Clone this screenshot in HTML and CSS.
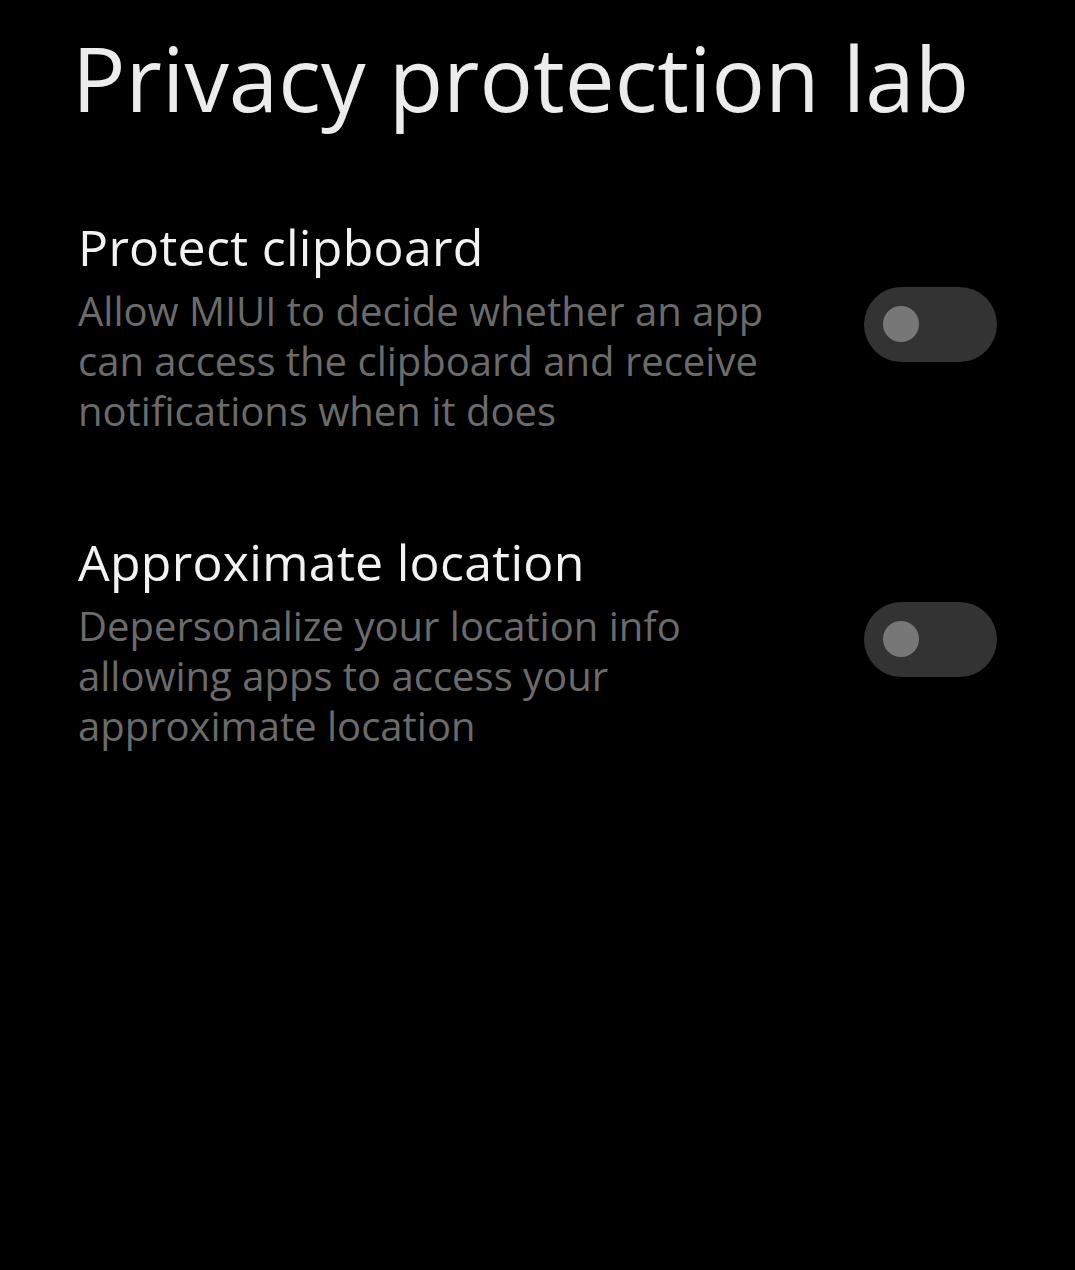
FILE: index.html
```html
<!DOCTYPE html>
<html lang="en">
<head>
  <meta charset="UTF-8" />
  <meta name="viewport" content="width=device-width, initial-scale=1.0"/>
  <title>Privacy protection lab</title>
  <link rel="stylesheet" href="styles.css">
</head>
<body>
  <h1 class="page-title">Privacy protection lab</h1>

  <ul class="settings">
    <li class="setting-row">
      <div class="setting-text">
        <h2>Protect clipboard</h2>
        <p>Allow MIUI to decide whether an app can access the clipboard and receive notifications when it does</p>
      </div>
      <span class="switch"><span class="knob"></span></span>
    </li>
    <li class="setting-row">
      <div class="setting-text">
        <h2>Approximate location</h2>
        <p>Depersonalize your location info allowing apps to access your approximate location</p>
      </div>
      <span class="switch"><span class="knob"></span></span>
    </li>
  </ul>
</body>
</html>
```

FILE: styles.css
```css
body {
  margin: 0;
  background: #000;
  font-family: "Open Sans", "Noto Sans", sans-serif;
  min-height: 1270px;
}

.page-title {
  margin: 0;
  padding: 28px 0 0 72px;
  font-size: 89px;
  font-weight: 400;
  line-height: 100px;
  color: #ececec;
}

.settings {
  list-style: none;
  margin: 0;
  padding: 91px 78px 0 78px;
}

.setting-row {
  display: flex;
  align-items: center;
  justify-content: space-between;
  margin-bottom: 98px;
}

.setting-text {
  width: 700px;
}

.setting-text h2 {
  margin: 0;
  font-size: 50px;
  font-weight: 500;
  line-height: 56px;
  color: #f2f2f2;
  letter-spacing: 0.3px;
}

.setting-text p {
  margin: 11px 0 0;
  font-size: 40px;
  line-height: 50px;
  color: #6b6b6b;
}

.switch {
  display: flex;
  align-items: center;
  width: 133px;
  height: 75px;
  border-radius: 38px;
  background: #333;
  flex-shrink: 0;
  margin-top: -7px;
}

.knob {
  width: 36px;
  height: 36px;
  border-radius: 50%;
  background: #777;
  margin-left: 19px;
}
```
